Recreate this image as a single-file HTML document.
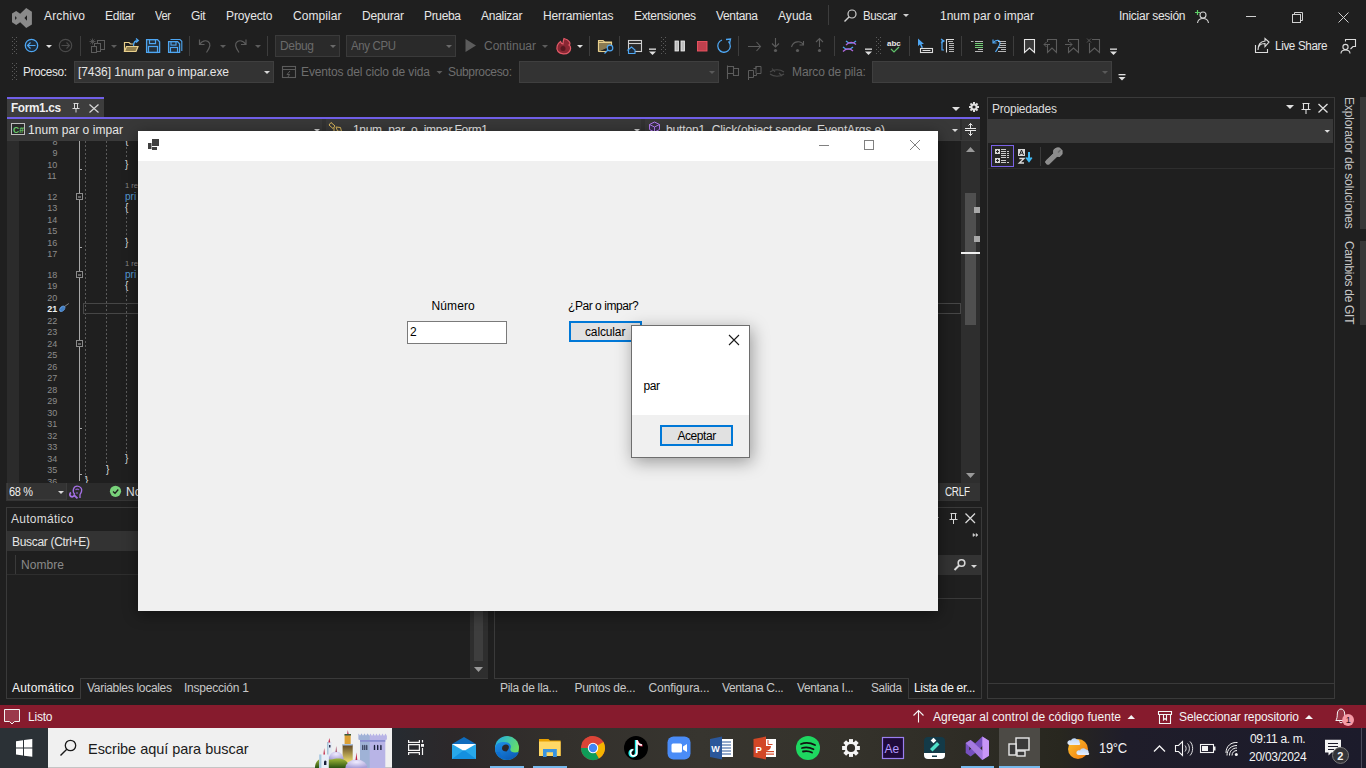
<!DOCTYPE html>
<html><head><meta charset="utf-8">
<style>
*{margin:0;padding:0;box-sizing:border-box}
html,body{width:1366px;height:768px;overflow:hidden;background:#1f1f1f;font-family:"Liberation Sans",sans-serif;color:#e6e6e6;font-size:12px}
.a{position:absolute}
.t{position:absolute;white-space:nowrap;line-height:1}
svg{position:absolute;overflow:visible}
</style></head><body>
<svg class="a" style="left:10px;top:6px;" width="24" height="24" viewBox="10 6 24 24"><path d="M12 13.5 L16.2 10.9 L20.2 13.8 L26.2 8 L31.9 11.7 L31.9 24.4 L26.2 28 L20.2 22.2 L16.2 25 L12 22.2 Z M15.1 16 L16.9 18 L15.1 20 Z M27 15.3 L24.4 18 L27 20.8 Z" fill="#8a8a8a" fill-rule="evenodd"/></svg>
<div class="t" style="left:44px;top:10px;font-size:12px;color:#e6e6e6;letter-spacing:0.164px;">Archivo</div>
<div class="t" style="left:105px;top:10px;font-size:12px;color:#e6e6e6;letter-spacing:-0.270px;">Editar</div>
<div class="t" style="left:155px;top:10px;font-size:12px;color:#e6e6e6;letter-spacing:-0.350px;transform-origin:0 0;transform:scaleX(0.9242);">Ver</div>
<div class="t" style="left:191px;top:10px;font-size:12px;color:#e6e6e6;letter-spacing:-0.418px;">Git</div>
<div class="t" style="left:226px;top:10px;font-size:12px;color:#e6e6e6;letter-spacing:-0.122px;">Proyecto</div>
<div class="t" style="left:293px;top:10px;font-size:12px;color:#e6e6e6;letter-spacing:0.069px;">Compilar</div>
<div class="t" style="left:362px;top:10px;font-size:12px;color:#e6e6e6;letter-spacing:-0.226px;">Depurar</div>
<div class="t" style="left:424px;top:10px;font-size:12px;color:#e6e6e6;letter-spacing:-0.339px;">Prueba</div>
<div class="t" style="left:481px;top:10px;font-size:12px;color:#e6e6e6;letter-spacing:-0.265px;">Analizar</div>
<div class="t" style="left:543px;top:10px;font-size:12px;color:#e6e6e6;letter-spacing:-0.139px;">Herramientas</div>
<div class="t" style="left:634px;top:10px;font-size:12px;color:#e6e6e6;letter-spacing:-0.338px;">Extensiones</div>
<div class="t" style="left:716px;top:10px;font-size:12px;color:#e6e6e6;letter-spacing:-0.341px;">Ventana</div>
<div class="t" style="left:778px;top:10px;font-size:12px;color:#e6e6e6;letter-spacing:0.047px;">Ayuda</div>
<div class="a" style="left:828px;top:5px;width:1px;height:20px;background:#3d3d3d;"></div>
<svg class="a" style="left:843px;top:8px;" width="15" height="15" viewBox="843 8 15 15"><circle cx="852" cy="14" r="4" fill="none" stroke="#d0d0d0" stroke-width="1.2"/><path d="M849 17 L844.5 21.5" stroke="#d0d0d0" stroke-width="1.4"/></svg>
<div class="t" style="left:863px;top:10px;font-size:12px;color:#e6e6e6;letter-spacing:-0.350px;transform-origin:0 0;transform:scaleX(0.9551);">Buscar</div>
<svg class="a" style="left:902px;top:13px;" width="8" height="6" viewBox="902 13 8 6"><path d="M903 14H909L906 17Z" fill="#d0d0d0"/></svg>
<div class="t" style="left:940px;top:10px;font-size:12px;color:#e6e6e6;letter-spacing:-0.003px;">1num par o impar</div>
<div class="t" style="left:1119px;top:10px;font-size:12px;color:#e6e6e6;letter-spacing:-0.272px;">Iniciar sesión</div>
<svg class="a" style="left:1193px;top:8px;" width="18" height="16" viewBox="1193 8 18 16"><path d="M1195 12.5H1200M1197.5 10V15" stroke="#5fd068" stroke-width="1.2"/><circle cx="1203" cy="15" r="3" fill="none" stroke="#d0d0d0" stroke-width="1.1"/><path d="M1197.5 23 C1198 19.5 1200.5 18.5 1203 18.5 C1205.5 18.5 1208 19.5 1208.5 23" fill="none" stroke="#d0d0d0" stroke-width="1.1"/></svg>
<div class="a" style="left:1246px;top:16px;width:10px;height:1px;background:#d0d0d0;"></div>
<svg class="a" style="left:1291px;top:11px;" width="13" height="13" viewBox="1291 11 13 13"><rect x="1292.5" y="14.5" width="8" height="8" fill="none" stroke="#d0d0d0"/><path d="M1294.5 14.5V12.5H1302.5V20.5H1300.5" fill="none" stroke="#d0d0d0"/></svg>
<svg class="a" style="left:1337px;top:11px;" width="13" height="13" viewBox="1337 11 13 13"><path d="M1338.5 12.5L1348.5 22.5M1348.5 12.5L1338.5 22.5" stroke="#d0d0d0" stroke-width="1"/></svg>
<svg class="a" style="left:0px;top:32px;" width="1366" height="56" viewBox="0 32 1366 56"><rect x="12" y="37" width="1" height="1" fill="#5a5a5a"/><rect x="16" y="37" width="1" height="1" fill="#5a5a5a"/><rect x="14" y="39" width="1" height="1" fill="#5a5a5a"/><rect x="12" y="41" width="1" height="1" fill="#5a5a5a"/><rect x="16" y="41" width="1" height="1" fill="#5a5a5a"/><rect x="14" y="43" width="1" height="1" fill="#5a5a5a"/><rect x="12" y="45" width="1" height="1" fill="#5a5a5a"/><rect x="16" y="45" width="1" height="1" fill="#5a5a5a"/><rect x="14" y="47" width="1" height="1" fill="#5a5a5a"/><rect x="12" y="49" width="1" height="1" fill="#5a5a5a"/><rect x="16" y="49" width="1" height="1" fill="#5a5a5a"/><rect x="14" y="51" width="1" height="1" fill="#5a5a5a"/><rect x="12" y="53" width="1" height="1" fill="#5a5a5a"/><rect x="16" y="53" width="1" height="1" fill="#5a5a5a"/><circle cx="31.5" cy="45.5" r="6.2" fill="#1c2a38" stroke="#4ea6f2" stroke-width="1.3"/><path d="M27.5 45.5H35.5M30.5 42.5L27.5 45.5L30.5 48.5" fill="none" stroke="#4ea6f2" stroke-width="1.2"/><path d="M46 45H52L49.0 48.0Z" fill="#e0e0e0"/><circle cx="65.5" cy="45.5" r="6.2" fill="none" stroke="#4a4a4a" stroke-width="1.2"/><path d="M61.5 45.5H69.5M66.5 42.5L69.5 45.5L66.5 48.5" fill="none" stroke="#4a4a4a" stroke-width="1.1"/><rect x="80" y="36" width="1" height="20" fill="#3d3d3d"/><path d="M92.5 38.5V44.5M89.5 41.5H95.5M90.5 39.5L94.5 43.5M94.5 39.5L90.5 43.5" stroke="#5c5c5c" stroke-width="0.8"/><rect x="97.5" y="40.5" width="7" height="9" fill="none" stroke="#5c5c5c"/><rect x="94.5" y="43.5" width="6" height="8" fill="#1f1f1f" stroke="#5c5c5c"/><rect x="91.5" y="46.5" width="5" height="6" fill="#1f1f1f" stroke="#5c5c5c"/><path d="M111 45H117L114.0 48.0Z" fill="#5c5c5c"/><path d="M124.5 51.5V42.5H129L130.5 44H133" fill="none" stroke="#e8cf8c" stroke-width="1.2"/><path d="M124.5 51.5L126.5 46.5H138L136 51.5Z" fill="#8f7d4c" stroke="#e8cf8c" stroke-width="1.2"/><path d="M133.5 46C133.5 42 135 40.5 138 40.5M136 38.5L138.3 40.5L136 42.5" fill="none" stroke="#4ea6f2" stroke-width="1.3"/><path d="M146.6 39.6H157.5L159.6 41.7V52.4H146.6Z" fill="#25303b" stroke="#4ea6f2" stroke-width="1.3"/><rect x="149.5" y="39.6" width="6" height="4" fill="none" stroke="#4ea6f2" stroke-width="1.2"/><rect x="148.5" y="46.5" width="9" height="6" fill="none" stroke="#4ea6f2" stroke-width="1.2"/><path d="M168.6 41.6H177.5L179.6 43.7V52.4H168.6Z" fill="#25303b" stroke="#4ea6f2" stroke-width="1.3"/><rect x="171" y="41.6" width="5" height="3.5" fill="none" stroke="#4ea6f2" stroke-width="1.1"/><rect x="170.5" y="47.5" width="7" height="5" fill="none" stroke="#4ea6f2" stroke-width="1.1"/><path d="M170.5 39.5H180L181.8 41.3V51" fill="none" stroke="#4ea6f2" stroke-width="1.1"/><rect x="189" y="36" width="1" height="20" fill="#3d3d3d"/><path d="M199.5 39.5V44.5H204.5M199.5 44.5C202 41 205.5 40 208 41.5C211 43.5 210.5 47 206.5 52.5" fill="none" stroke="#5c5c5c" stroke-width="1.2"/><path d="M220 45H226L223.0 48.0Z" fill="#5c5c5c"/><path d="M246 39.5V44.5H241M246 44.5C243.5 41 240 40 237.5 41.5C234.5 43.5 235 47 239 52.5" fill="none" stroke="#5c5c5c" stroke-width="1.2"/><path d="M255 45H261L258.0 48.0Z" fill="#5c5c5c"/><rect x="267" y="36" width="1" height="20" fill="#3d3d3d"/><path d="M330 45H336L333.0 48.0Z" fill="#6a6a6a"/><path d="M446 45H452L449.0 48.0Z" fill="#6a6a6a"/><path d="M465.5 39V52L476 45.5Z" fill="#5c5c5c"/><path d="M542 45H548L545.0 48.0Z" fill="#5c5c5c"/><path d="M564 38.5C570 40 571 44 569 45C571 46 571.5 50 568.5 52.5C566 54.5 560.5 54.5 558 51.5C555.5 48 557.5 43.5 560.5 41.5C561 43 562 44 563 44C563 41.5 563.5 40 564 38.5Z" fill="#8a2733" stroke="#e35a68" stroke-width="1.2"/><circle cx="563" cy="48.5" r="2.5" fill="#5a1820"/><path d="M577 45H583L580.0 48.0Z" fill="#e0e0e0"/><rect x="589" y="36" width="1" height="20" fill="#3d3d3d"/><path d="M598.5 51.5V40.5H603L604.5 42H611.5V46" fill="#8a7a52" stroke="#e8cf8c" stroke-width="1.1"/><path d="M598.5 51.5V42.5H611.5V45" fill="#8a7a52" stroke="#e8cf8c" stroke-width="1.1"/><path d="M598.5 51.5H606" stroke="#e8cf8c" stroke-width="1.1"/><circle cx="610" cy="48" r="2.8" fill="#1f2a36" stroke="#4ea6f2" stroke-width="1.2"/><path d="M608 50L604.5 53.5" stroke="#4ea6f2" stroke-width="1.3"/><rect x="619" y="36" width="1" height="20" fill="#3d3d3d"/><rect x="628.5" y="40.5" width="13" height="11" fill="#2a2a2a" stroke="#cfcfcf" stroke-width="1.1"/><path d="M628.5 43.5H641.5" stroke="#cfcfcf" stroke-width="1.1"/><path d="M628 50L631.5 47L635 50V53.5H628.5V50Z" fill="#1f2a36" stroke="#4ea6f2" stroke-width="1.1"/><rect x="649" y="48.5" width="7" height="1.3" fill="#e0e0e0"/><path d="M649 51.5H656L652.5 55.0Z" fill="#e0e0e0"/><rect x="661" y="37" width="1" height="1" fill="#5a5a5a"/><rect x="665" y="37" width="1" height="1" fill="#5a5a5a"/><rect x="663" y="39" width="1" height="1" fill="#5a5a5a"/><rect x="661" y="41" width="1" height="1" fill="#5a5a5a"/><rect x="665" y="41" width="1" height="1" fill="#5a5a5a"/><rect x="663" y="43" width="1" height="1" fill="#5a5a5a"/><rect x="661" y="45" width="1" height="1" fill="#5a5a5a"/><rect x="665" y="45" width="1" height="1" fill="#5a5a5a"/><rect x="663" y="47" width="1" height="1" fill="#5a5a5a"/><rect x="661" y="49" width="1" height="1" fill="#5a5a5a"/><rect x="665" y="49" width="1" height="1" fill="#5a5a5a"/><rect x="663" y="51" width="1" height="1" fill="#5a5a5a"/><rect x="661" y="53" width="1" height="1" fill="#5a5a5a"/><rect x="665" y="53" width="1" height="1" fill="#5a5a5a"/><rect x="675" y="41" width="3.5" height="10" fill="#bdbdbd" stroke="#f0f0f0" stroke-width="0.8"/><rect x="681" y="41" width="3.5" height="10" fill="#bdbdbd" stroke="#f0f0f0" stroke-width="0.8"/><rect x="697.5" y="41.5" width="9.5" height="9.5" fill="#c0404e" stroke="#f05563" stroke-width="0.9"/><path d="M728.5 41.5A6.3 6.3 0 1 1 722 40" fill="none" stroke="#4ea6f2" stroke-width="1.3"/><path d="M726 39.5L730.5 39L729.5 43.5" fill="none" stroke="#4ea6f2" stroke-width="1.3"/><rect x="738" y="36" width="1" height="20" fill="#3d3d3d"/><path d="M748 46.5H760.5M756.5 42L760.5 46.5L756.5 51" fill="none" stroke="#5c5c5c" stroke-width="1.1"/><path d="M775.5 38V47M772 43.5L775.5 47L779 43.5" fill="none" stroke="#5c5c5c" stroke-width="1.1"/><circle cx="775.5" cy="50.5" r="1.6" fill="#5c5c5c"/><path d="M791.5 47C793 41 801 40 803.5 45M803.5 41V45H799.5" fill="none" stroke="#5c5c5c" stroke-width="1.1"/><circle cx="797.5" cy="50.5" r="1.6" fill="#5c5c5c"/><path d="M819.5 38.5V47M816 42L819.5 38.5L823 42" fill="none" stroke="#5c5c5c" stroke-width="1.1"/><circle cx="819.5" cy="50.5" r="1.6" fill="#5c5c5c"/><rect x="834" y="36" width="1" height="20" fill="#3d3d3d"/><path d="M846 41C849 44 853 44 856 41M843 47C846 50 850 50 853 47" fill="none" stroke="#4ea6f2" stroke-width="1.2"/><path d="M846 45C849 41.5 853 41.5 856 44.5M843 51.5C846 48 850 48 853 51" fill="none" stroke="#b067e0" stroke-width="1.2"/><rect x="865" y="48.5" width="7" height="1.3" fill="#e0e0e0"/><path d="M865 51.5H872L868.5 55.0Z" fill="#e0e0e0"/><rect x="876" y="37" width="1" height="1" fill="#5a5a5a"/><rect x="880" y="37" width="1" height="1" fill="#5a5a5a"/><rect x="878" y="39" width="1" height="1" fill="#5a5a5a"/><rect x="876" y="41" width="1" height="1" fill="#5a5a5a"/><rect x="880" y="41" width="1" height="1" fill="#5a5a5a"/><rect x="878" y="43" width="1" height="1" fill="#5a5a5a"/><rect x="876" y="45" width="1" height="1" fill="#5a5a5a"/><rect x="880" y="45" width="1" height="1" fill="#5a5a5a"/><rect x="878" y="47" width="1" height="1" fill="#5a5a5a"/><rect x="876" y="49" width="1" height="1" fill="#5a5a5a"/><rect x="880" y="49" width="1" height="1" fill="#5a5a5a"/><rect x="878" y="51" width="1" height="1" fill="#5a5a5a"/><rect x="876" y="53" width="1" height="1" fill="#5a5a5a"/><rect x="880" y="53" width="1" height="1" fill="#5a5a5a"/><text x="887" y="45.5" font-family="Liberation Sans" font-weight="bold" font-size="8" fill="#e8e8e8">abc</text><path d="M891 49L894 52L899 47" fill="none" stroke="#5fc26a" stroke-width="1.2"/><rect x="909" y="36" width="1" height="20" fill="#3d3d3d"/><path d="M918 38.5V46L920 44.5L921.5 48L923 47.5L921.5 44L924 44Z" fill="#4ea6f2"/><rect x="920.5" y="48.5" width="12" height="4" fill="none" stroke="#dcdcdc" stroke-width="1.1"/><rect x="922.5" y="50" width="8" height="1" fill="#dcdcdc"/><path d="M944 41H942V50H944M941 39L944 41L941 43" fill="none" stroke="#4ea6f2" stroke-width="1.2"/><path d="M946.5 52.5V39.5H954" fill="none" stroke="#dcdcdc" stroke-width="1.1"/><path d="M948 41.5H953M949 43.5H954M949 45.5H954M949 47.5H954M949 49.5H954M949 51.5H954" stroke="#dcdcdc" stroke-width="0.8"/><rect x="961" y="36" width="1" height="20" fill="#3d3d3d"/><path d="M971 41.5H973.5M975 41.5H983M975 43.5H983M975 45.5H983M975 47.5H983M978 49.5H983M975 51.5H983" stroke="#c8c8c8" stroke-width="0.9"/><path d="M975 43.5H983M975 45.5H983M975 47.5H983" stroke="#6ccf6f" stroke-width="0.9"/><path d="M993 39.5V43H996.5M993 43C996 39 1000 40 1000 43C1000 46 998 47.5 995.5 52" fill="none" stroke="#4ea6f2" stroke-width="1.2"/><path d="M998 41.5H1006M1000 43.5H1006M1000 45.5H1006M998 47.5H1006M1001 49.5H1006M998 51.5H1006" stroke="#c8c8c8" stroke-width="0.9"/><rect x="1013" y="36" width="1" height="20" fill="#3d3d3d"/><path d="M1024.5 39.5H1034.5V52.5L1029.5 48L1024.5 52.5Z" fill="#3a3a3a" stroke="#e6e6e6" stroke-width="1.1"/><path d="M1047.5 42V39.5H1056.5V52.5L1052 48L1047.5 52.5V44.5" fill="none" stroke="#5c5c5c" stroke-width="1.1"/><path d="M1044 44.5H1050M1046.5 42L1044 44.5L1046.5 47" fill="none" stroke="#5c5c5c" stroke-width="1"/><path d="M1068.5 42V39.5H1078.5V52.5L1073.5 48L1068.5 52.5V47" fill="none" stroke="#5c5c5c" stroke-width="1.1"/><path d="M1065 44.5H1072M1069.5 42L1072 44.5L1069.5 47" fill="none" stroke="#5c5c5c" stroke-width="1"/><path d="M1089.5 43V52.5L1094.5 48L1099.5 52.5V39.5H1092" fill="none" stroke="#5c5c5c" stroke-width="1.1"/><path d="M1087 38.5L1091 42.5M1091 38.5L1087 42.5" stroke="#5c5c5c" stroke-width="0.9"/><rect x="1110" y="48.5" width="7" height="1.3" fill="#e0e0e0"/><path d="M1110 51.5H1117L1113.5 55.0Z" fill="#e0e0e0"/><path d="M1255.5 45V52.5H1267.5V49" fill="none" stroke="#dcdcdc" stroke-width="1.1"/><path d="M1258 50C1258 45 1261 43.5 1265 43.5V46.5L1269 42L1265 38.5V41C1260.5 41.5 1258 45 1258 50Z" fill="none" stroke="#dcdcdc" stroke-width="1.1"/><path d="M1345.5 41.5V39.5H1355.5V46.5H1353L1350.5 49" fill="none" stroke="#dcdcdc" stroke-width="1.1"/><circle cx="1345.5" cy="47" r="2.6" fill="#1f1f1f" stroke="#dcdcdc" stroke-width="1.1"/><path d="M1341 53.5C1341 50.5 1343 50 1345.5 50C1348 50 1350 50.5 1350 53.5" fill="none" stroke="#dcdcdc" stroke-width="1.1"/><rect x="12" y="63" width="1" height="1" fill="#5a5a5a"/><rect x="16" y="63" width="1" height="1" fill="#5a5a5a"/><rect x="14" y="65" width="1" height="1" fill="#5a5a5a"/><rect x="12" y="67" width="1" height="1" fill="#5a5a5a"/><rect x="16" y="67" width="1" height="1" fill="#5a5a5a"/><rect x="14" y="69" width="1" height="1" fill="#5a5a5a"/><rect x="12" y="71" width="1" height="1" fill="#5a5a5a"/><rect x="16" y="71" width="1" height="1" fill="#5a5a5a"/><rect x="14" y="73" width="1" height="1" fill="#5a5a5a"/><rect x="12" y="75" width="1" height="1" fill="#5a5a5a"/><rect x="16" y="75" width="1" height="1" fill="#5a5a5a"/><rect x="14" y="77" width="1" height="1" fill="#5a5a5a"/><rect x="12" y="79" width="1" height="1" fill="#5a5a5a"/><rect x="16" y="79" width="1" height="1" fill="#5a5a5a"/><path d="M264 71H270L267.0 74.0Z" fill="#d8d8d8"/><rect x="282.5" y="66.5" width="13" height="11" fill="none" stroke="#5c5c5c" stroke-width="1.1"/><path d="M282.5 69.5H295.5" stroke="#5c5c5c"/><path d="M290 71L287 74.5H289.5L288 77" fill="none" stroke="#5c5c5c" stroke-width="1"/><path d="M436.5 71H442.5L439.5 74.0Z" fill="#5c5c5c"/><path d="M709 71H715L712.0 74.0Z" fill="#555"/><path d="M727.5 79V65.5M727.5 66.5H733.5V73.5H727.5M733.5 68.5H738.5V75.5H733.5V73.5" fill="none" stroke="#5c5c5c" stroke-width="1.1"/><path d="M748.5 80V70.5H753.5V77.5H748.5M753.5 68.5H756V66.5H761V73.5H756.5V75.5H753.5M756 66V68.5V73.5" fill="none" stroke="#5c5c5c" stroke-width="1"/><path d="M770 72C774 69 780 69 784 72M770 74C774 77 780 77 784 74M772 68.5L775 72M782 76L779 73" fill="none" stroke="#4a4a4a" stroke-width="1.1"/><path d="M1102 71H1108L1105.0 74.0Z" fill="#555"/><rect x="1118.5" y="74" width="7" height="1.3" fill="#e0e0e0"/><path d="M1118.5 77H1125.5L1122.0 80.5Z" fill="#e0e0e0"/></svg>
<div class="a" style="left:275px;top:35px;width:65px;height:22px;background:#2a2a2a;border:1px solid #3a3a3a"></div>
<div class="t" style="left:280px;top:40px;font-size:12px;color:#6a6a6a;letter-spacing:-0.341px;">Debug</div>
<div class="a" style="left:346px;top:35px;width:110px;height:22px;background:#2a2a2a;border:1px solid #3a3a3a"></div>
<div class="t" style="left:351px;top:40px;font-size:12px;color:#6a6a6a;letter-spacing:-0.350px;transform-origin:0 0;transform:scaleX(0.9524);">Any CPU</div>
<div class="t" style="left:484px;top:40px;font-size:12px;color:#6a6a6a;letter-spacing:-0.004px;">Continuar</div>
<div class="t" style="left:1275px;top:40px;font-size:12px;color:#e6e6e6;letter-spacing:-0.350px;transform-origin:0 0;transform:scaleX(0.9701);">Live Share</div>
<div class="t" style="left:23px;top:66px;font-size:12px;color:#e6e6e6;letter-spacing:-0.350px;transform-origin:0 0;transform:scaleX(0.9798);">Proceso:</div>
<div class="a" style="left:74px;top:61px;width:200px;height:22px;background:#333333;border:1px solid #3f3f3f"></div>
<div class="t" style="left:78px;top:66px;font-size:12px;color:#e6e6e6;letter-spacing:-0.068px;">[7436] 1num par o impar.exe</div>
<div class="t" style="left:301px;top:66px;font-size:12px;color:#6e6e6e;letter-spacing:-0.128px;">Eventos del ciclo de vida</div>
<div class="t" style="left:448px;top:66px;font-size:12px;color:#6e6e6e;letter-spacing:-0.338px;">Subproceso:</div>
<div class="a" style="left:519px;top:61px;width:200px;height:22px;background:#333333;border:1px solid #3f3f3f"></div>
<div class="t" style="left:792px;top:66px;font-size:12px;color:#6e6e6e;letter-spacing:-0.121px;">Marco de pila:</div>
<div class="a" style="left:872px;top:61px;width:240px;height:22px;background:#333333;border:1px solid #3f3f3f"></div>
<svg class="a" style="left:0px;top:60px;" width="1366" height="26" viewBox="0 60 1366 26"><path d="M264 71H270L267.0 74.0Z" fill="#d8d8d8"/><path d="M709 71H715L712.0 74.0Z" fill="#5a5a5a"/><path d="M1102 71H1108L1105.0 74.0Z" fill="#5a5a5a"/></svg>
<svg class="a" style="left:0px;top:40px;" width="1366" height="16" viewBox="0 40 1366 16"><path d="M330 45H336L333.0 48.0Z" fill="#6a6a6a"/><path d="M446 45H452L449.0 48.0Z" fill="#6a6a6a"/></svg>
<div class="a" style="left:7px;top:141px;width:953px;height:342px;background:#1f1f1f;"></div>
<div class="a" style="left:7px;top:141px;width:12px;height:342px;background:#2b2b2b;"></div>
<div class="a" style="left:961px;top:141px;width:19px;height:342px;background:#2e2e2e;"></div>
<svg class="a" style="left:960px;top:140px;" width="22" height="345" viewBox="960 140 22 345"><path d="M966 152H975L970.5 147Z" fill="#9a9a9a"/><path d="M966 473H975L970.5 478Z" fill="#9a9a9a"/></svg>
<div class="a" style="left:965px;top:193px;width:11px;height:132px;background:#4f4f4f;"></div>
<div class="a" style="left:974px;top:207px;width:6px;height:6px;background:#a8a8a8;"></div>
<div class="a" style="left:974px;top:236px;width:6px;height:6px;background:#a8a8a8;"></div>
<div class="a" style="left:961px;top:252px;width:19px;height:2px;background:#f0f0f0;"></div>
<div class="t" style="left:52.6px;top:138px;font-size:9px;color:#8c8c8c;font-family:"Liberation Mono",monospace;">8</div>
<div class="t" style="left:52.6px;top:149px;font-size:9px;color:#8c8c8c;font-family:"Liberation Mono",monospace;">9</div>
<div class="t" style="left:47.2px;top:161px;font-size:9px;color:#8c8c8c;font-family:"Liberation Mono",monospace;">10</div>
<div class="t" style="left:47.2px;top:172px;font-size:9px;color:#8c8c8c;font-family:"Liberation Mono",monospace;">11</div>
<div class="t" style="left:47.2px;top:193px;font-size:9px;color:#8c8c8c;font-family:"Liberation Mono",monospace;">12</div>
<div class="t" style="left:47.2px;top:204px;font-size:9px;color:#8c8c8c;font-family:"Liberation Mono",monospace;">13</div>
<div class="t" style="left:47.2px;top:216px;font-size:9px;color:#8c8c8c;font-family:"Liberation Mono",monospace;">14</div>
<div class="t" style="left:47.2px;top:227px;font-size:9px;color:#8c8c8c;font-family:"Liberation Mono",monospace;">15</div>
<div class="t" style="left:47.2px;top:239px;font-size:9px;color:#8c8c8c;font-family:"Liberation Mono",monospace;">16</div>
<div class="t" style="left:47.2px;top:250px;font-size:9px;color:#8c8c8c;font-family:"Liberation Mono",monospace;">17</div>
<div class="t" style="left:47.2px;top:271px;font-size:9px;color:#8c8c8c;font-family:"Liberation Mono",monospace;">18</div>
<div class="t" style="left:47.2px;top:282px;font-size:9px;color:#8c8c8c;font-family:"Liberation Mono",monospace;">19</div>
<div class="t" style="left:47.2px;top:294px;font-size:9px;color:#8c8c8c;font-family:"Liberation Mono",monospace;">20</div>
<div class="t" style="left:47.2px;top:305px;font-size:9px;color:#f0f0f0;font-weight:bold;font-family:"Liberation Mono",monospace;">21</div>
<div class="t" style="left:47.2px;top:317px;font-size:9px;color:#8c8c8c;font-family:"Liberation Mono",monospace;">22</div>
<div class="t" style="left:47.2px;top:328px;font-size:9px;color:#8c8c8c;font-family:"Liberation Mono",monospace;">23</div>
<div class="t" style="left:47.2px;top:340px;font-size:9px;color:#8c8c8c;font-family:"Liberation Mono",monospace;">24</div>
<div class="t" style="left:47.2px;top:351px;font-size:9px;color:#8c8c8c;font-family:"Liberation Mono",monospace;">25</div>
<div class="t" style="left:47.2px;top:363px;font-size:9px;color:#8c8c8c;font-family:"Liberation Mono",monospace;">26</div>
<div class="t" style="left:47.2px;top:374px;font-size:9px;color:#8c8c8c;font-family:"Liberation Mono",monospace;">27</div>
<div class="t" style="left:47.2px;top:386px;font-size:9px;color:#8c8c8c;font-family:"Liberation Mono",monospace;">28</div>
<div class="t" style="left:47.2px;top:397px;font-size:9px;color:#8c8c8c;font-family:"Liberation Mono",monospace;">29</div>
<div class="t" style="left:47.2px;top:409px;font-size:9px;color:#8c8c8c;font-family:"Liberation Mono",monospace;">30</div>
<div class="t" style="left:47.2px;top:420px;font-size:9px;color:#8c8c8c;font-family:"Liberation Mono",monospace;">31</div>
<div class="t" style="left:47.2px;top:432px;font-size:9px;color:#8c8c8c;font-family:"Liberation Mono",monospace;">32</div>
<div class="t" style="left:47.2px;top:443px;font-size:9px;color:#8c8c8c;font-family:"Liberation Mono",monospace;">33</div>
<div class="t" style="left:47.2px;top:455px;font-size:9px;color:#8c8c8c;font-family:"Liberation Mono",monospace;">34</div>
<div class="t" style="left:47.2px;top:466px;font-size:9px;color:#8c8c8c;font-family:"Liberation Mono",monospace;">35</div>
<div class="t" style="left:47.2px;top:478px;font-size:9px;color:#8c8c8c;font-family:"Liberation Mono",monospace;">36</div>
<svg class="a" style="left:0px;top:0px;" width="1366" height="768" viewBox="0 0 1366 768"><rect x="79" y="141" width="1" height="340" fill="#a8a8a8"/><rect x="76.5" y="193.5" width="6" height="6" fill="#1f1f1f" stroke="#8c8c8c" stroke-width="1"/><rect x="78" y="196.5" width="3" height="1" fill="#b0b0b0"/><rect x="76.5" y="271.5" width="6" height="6" fill="#1f1f1f" stroke="#8c8c8c" stroke-width="1"/><rect x="78" y="274.5" width="3" height="1" fill="#b0b0b0"/><rect x="76.5" y="340.5" width="6" height="6" fill="#1f1f1f" stroke="#8c8c8c" stroke-width="1"/><rect x="78" y="343.5" width="3" height="1" fill="#b0b0b0"/><rect x="79" y="169" width="3" height="1" fill="#a8a8a8"/><rect x="79" y="247" width="3" height="1" fill="#a8a8a8"/><rect x="79" y="428" width="3" height="1" fill="#a8a8a8"/><rect x="79" y="474" width="3" height="1" fill="#a8a8a8"/><path d="M85.5 141V479" stroke="#5a5a5a" stroke-width="1" stroke-dasharray="2 2"/><path d="M106.5 141V466" stroke="#5a5a5a" stroke-width="1" stroke-dasharray="2 2"/><path d="M126.5 147V159" stroke="#5a5a5a" stroke-width="1" stroke-dasharray="2 2"/><path d="M126.5 213V238" stroke="#5a5a5a" stroke-width="1" stroke-dasharray="2 2"/><path d="M126.5 291V455" stroke="#5a5a5a" stroke-width="1" stroke-dasharray="2 2"/><rect x="83.5" y="303.5" width="877" height="10" fill="none" stroke="#464646" stroke-width="1"/><path d="M59.5 310C59.5 308 61.5 306 63.5 306C64.5 306 65 306.5 65 307.5C65 309.5 63 311.5 61 311.5C60 311.5 59.5 311 59.5 310Z" fill="#4f8fd6" stroke="#6aa8ef" stroke-width="0.7"/><path d="M60.5 310L64 306.5M61.5 311L65 307.5" stroke="#2a5a90" stroke-width="0.6"/><path d="M64.5 306.5L68.8 303.5" stroke="#9a9a9a" stroke-width="0.8"/></svg>
<div class="t" style="left:125px;top:136px;font-size:10px;color:#dcdcdc;font-family:"Liberation Mono",monospace;">{</div>
<div class="t" style="left:125px;top:203px;font-size:10px;color:#dcdcdc;font-family:"Liberation Mono",monospace;">{</div>
<div class="t" style="left:125px;top:281px;font-size:10px;color:#dcdcdc;font-family:"Liberation Mono",monospace;">{</div>
<div class="t" style="left:125px;top:160px;font-size:10px;color:#dcdcdc;font-family:"Liberation Mono",monospace;">}</div>
<div class="t" style="left:125px;top:238px;font-size:10px;color:#dcdcdc;font-family:"Liberation Mono",monospace;">}</div>
<div class="t" style="left:125px;top:454px;font-size:10px;color:#dcdcdc;font-family:"Liberation Mono",monospace;">}</div>
<div class="t" style="left:106px;top:465px;font-size:10px;color:#dcdcdc;font-family:"Liberation Mono",monospace;">}</div>
<div class="t" style="left:85px;top:476px;font-size:10px;color:#dcdcdc;font-family:"Liberation Mono",monospace;">}</div>
<div class="t" style="left:125px;top:192px;font-size:10px;color:#569cd6;font-family:"Liberation Mono",monospace;">pri</div>
<div class="t" style="left:125px;top:182px;font-size:7.5px;color:#8a8a8a;">1 re</div>
<div class="t" style="left:125px;top:270px;font-size:10px;color:#569cd6;font-family:"Liberation Mono",monospace;">pri</div>
<div class="t" style="left:125px;top:260px;font-size:7.5px;color:#8a8a8a;">1 re</div>
<div class="a" style="left:6px;top:483px;width:974px;height:18px;background:#2b2b2b;border:1px solid #353535;border-top:none"></div>
<div class="a" style="left:7px;top:483px;width:60px;height:17px;background:#333333;border:1px solid #3c3c3c;border-top:none"></div>
<div class="t" style="left:9px;top:486px;font-size:12px;color:#f0f0f0;letter-spacing:-0.350px;transform-origin:0 0;transform:scaleX(0.9124);">68 %</div>
<svg class="a" style="left:56px;top:486px;" width="90" height="14" viewBox="56 486 90 14"><path d="M58 491H64L61.0 494.0Z" fill="#d8d8d8"/><path d="M75 494.5C73.3 493 72.8 491 73.5 489C74.5 486.5 77 485.8 79 486.5C81 487.3 82 489.5 81.5 491.5C81.2 492.7 80.5 493.5 80 494.5V498" fill="none" stroke="#a470e4" stroke-width="1.3"/><path d="M77 492V494M75.5 490C76.5 488.8 78 488.8 79 490" fill="none" stroke="#8a5cc8" stroke-width="1.1"/><path d="M71 492.5A2.3 2.3 0 1 0 74.3 495.3L77.5 498.3" fill="none" stroke="#a470e4" stroke-width="1.8"/><circle cx="115.5" cy="491.3" r="5.6" fill="#78d27a"/><path d="M113 491.5L115 493.3L118.3 489.5" fill="none" stroke="#1f1f1f" stroke-width="1.3"/></svg>
<div class="t" style="left:126px;top:486px;font-size:12px;color:#f0f0f0;">No</div>
<div class="a" style="left:940px;top:483px;width:40px;height:17px;background:#333333;"></div>
<div class="t" style="left:945px;top:486px;font-size:12px;color:#f0f0f0;letter-spacing:-0.350px;transform-origin:0 0;transform:scaleX(0.8254);">CRLF</div>
<div class="a" style="left:7px;top:97px;width:97px;height:2px;background:#7160e8;"></div>
<div class="a" style="left:7px;top:99px;width:97px;height:18px;background:#3d3d3d;"></div>
<div class="t" style="left:11px;top:102px;font-size:12px;color:#f0f0f0;letter-spacing:-0.350px;transform-origin:0 0;transform:scaleX(0.9822);font-weight:bold;">Form1.cs</div>
<svg class="a" style="left:70px;top:102px;" width="12" height="12" viewBox="70 102 12 12"><path d="M73.5 103.5H78.5M74.5 103.5V108.5H77.5V103.5M72.5 108.5H79.5M76 108.5V112.5" fill="none" stroke="#d8d8d8" stroke-width="1"/></svg>
<svg class="a" style="left:88px;top:103px;" width="12" height="11" viewBox="88 103 12 11"><path d="M89.5 104.5L98.5 112.5M98.5 104.5L89.5 112.5" stroke="#d8d8d8" stroke-width="1.2"/></svg>
<div class="a" style="left:7px;top:117px;width:973px;height:2px;background:#7160e8;"></div>
<div class="a" style="left:7px;top:119px;width:973px;height:21px;background:#383838;"></div>
<div class="a" style="left:7px;top:140px;width:973px;height:1px;background:#2e2e2e;"></div>
<svg class="a" style="left:10px;top:122px;" width="16" height="14" viewBox="10 122 16 14"><rect x="11.5" y="123.5" width="13" height="11" fill="#2a2a2a" stroke="#bdbdbd" stroke-width="1"/><text x="13" y="132.5" font-family="Liberation Sans" font-size="8.5" font-weight="bold" fill="#6ccf6f">C#</text></svg>
<div class="t" style="left:28px;top:124px;font-size:12px;color:#e6e6e6;letter-spacing:0.063px;">1num par o impar</div>
<svg class="a" style="left:300px;top:120px;" width="680" height="20" viewBox="300 120 680 20"><path d="M314 129H320L317.0 132.0Z" fill="#cfcfcf"/><path d="M634 129H640L637.0 132.0Z" fill="#cfcfcf"/><path d="M952 129H958L955.0 132.0Z" fill="#d8d8d8"/></svg>
<div class="a" style="left:322px;top:119px;width:4px;height:21px;background:#323232;"></div>
<div class="a" style="left:641px;top:119px;width:4px;height:21px;background:#323232;"></div>
<svg class="a" style="left:326px;top:120px;" width="22" height="14" viewBox="326 120 22 14"><path d="M331 122.5L335 126L333 128.5L329 125Z M336 127L340.5 127.5L341.5 131.5L337.5 131Z M334 127.5V131.5" fill="none" stroke="#dcb85c" stroke-width="1"/></svg>
<div class="t" style="left:353px;top:124px;font-size:12px;color:#e6e6e6;letter-spacing:-0.305px;">1num_par_o_impar.Form1</div>
<svg class="a" style="left:646px;top:121px;" width="16" height="14" viewBox="646 121 16 14"><path d="M649.5 124.5L654.5 122L659.5 124.5V129.5L654.5 132L649.5 129.5Z M649.5 124.5L654.5 127L659.5 124.5 M654.5 127V132" fill="#3a2e52" stroke="#b27cf0" stroke-width="1"/></svg>
<div class="t" style="left:666px;top:124px;font-size:12px;color:#e6e6e6;letter-spacing:-0.128px;">button1_Click(object sender, EventArgs e)</div>
<div class="a" style="left:960px;top:119px;width:2px;height:21px;background:#2c2c2c;"></div>
<div class="a" style="left:962px;top:119px;width:18px;height:21px;background:#333333;"></div>
<div class="a" style="left:7px;top:140px;width:973px;height:1px;background:#3a3a3a;"></div>
<svg class="a" style="left:962px;top:120px;" width="18" height="20" viewBox="962 120 18 20"><path d="M965 128.5H976M965 130.5H976M970.5 123.5V128M968.5 125.5L970.5 123.5L972.5 125.5M970.5 131V135.5M968.5 133.5L970.5 135.5L972.5 133.5" fill="none" stroke="#e8e8e8" stroke-width="1"/></svg>
<svg class="a" style="left:948px;top:98px;" width="34" height="18" viewBox="948 98 34 18"><path d="M952 107H960L956.0 111.0Z" fill="#e0e0e0"/><g transform="translate(974 107)" fill="#e0e0e0"><rect x="-1" y="-5" width="2" height="2" transform="rotate(0)"/><rect x="-1" y="-5" width="2" height="2" transform="rotate(45)"/><rect x="-1" y="-5" width="2" height="2" transform="rotate(90)"/><rect x="-1" y="-5" width="2" height="2" transform="rotate(135)"/><rect x="-1" y="-5" width="2" height="2" transform="rotate(180)"/><rect x="-1" y="-5" width="2" height="2" transform="rotate(225)"/><rect x="-1" y="-5" width="2" height="2" transform="rotate(270)"/><rect x="-1" y="-5" width="2" height="2" transform="rotate(315)"/><circle r="3.6"/><circle r="1.6" fill="#1f1f1f"/></g></svg>
<div class="a" style="left:6px;top:507px;width:482px;height:172px;background:#1f1f1f;border:1px solid #3a3a3a;border-bottom:none"></div>
<div class="t" style="left:11px;top:513px;font-size:12px;color:#dcdcdc;letter-spacing:0.274px;">Automático</div>
<div class="a" style="left:7px;top:531px;width:480px;height:20px;background:#333333;"></div>
<div class="t" style="left:12px;top:536px;font-size:12px;color:#e6e6e6;letter-spacing:-0.311px;">Buscar (Ctrl+E)</div>
<div class="a" style="left:15px;top:555px;width:1px;height:19px;background:#3a3a3a;"></div>
<div class="t" style="left:21px;top:559px;font-size:12px;color:#8a8a8a;letter-spacing:0.064px;">Nombre</div>
<div class="a" style="left:7px;top:574px;width:463px;height:1px;background:#2e2e2e;"></div>
<div class="a" style="left:470px;top:575px;width:18px;height:103px;background:#2e2e2e;"></div>
<div class="a" style="left:474px;top:575px;width:9px;height:86px;background:#3e3e3e;"></div>
<svg class="a" style="left:470px;top:660px;" width="18" height="18" viewBox="470 660 18 18"><path d="M474 667H483L478.5 672Z" fill="#9a9a9a"/></svg>
<div class="a" style="left:6px;top:678px;width:482px;height:1px;background:#3a3a3a;"></div>
<div class="a" style="left:6px;top:678px;width:75px;height:21px;background:#1f1f1f;border:1px solid #3a3a3a;border-top:none"></div>
<div class="t" style="left:12px;top:682px;font-size:12px;color:#f4f4f4;letter-spacing:0.219px;">Automático</div>
<div class="t" style="left:87px;top:682px;font-size:12px;color:#c8c8c8;letter-spacing:-0.302px;">Variables locales</div>
<div class="t" style="left:184px;top:682px;font-size:12px;color:#c8c8c8;letter-spacing:-0.216px;">Inspección 1</div>
<div class="a" style="left:494px;top:507px;width:488px;height:172px;background:#1f1f1f;border:1px solid #3a3a3a;border-bottom:none"></div>
<svg class="a" style="left:930px;top:508px;" width="50" height="70" viewBox="930 508 50 70"><path d="M933 517H939L936.0 520.0Z" fill="#d8d8d8"/><path d="M950.5 513.5H956.5M951.5 513.5V519.5H955.5V513.5M949.5 519.5H957.5M953.5 519.5V524" fill="none" stroke="#d8d8d8" stroke-width="1"/><path d="M965.5 513.5L975 523M975 513.5L965.5 523" stroke="#d8d8d8" stroke-width="1.3"/><path d="M973 533.5L975 535L973 536.5ZM976 533.5L978 535L976 536.5Z" fill="#cfcfcf" stroke="#cfcfcf" stroke-width="0.6"/></svg>
<div class="a" style="left:495px;top:555px;width:486px;height:20px;background:#333333;"></div>
<svg class="a" style="left:945px;top:556px;" width="36" height="20" viewBox="945 556 36 20"><circle cx="961.5" cy="563" r="3.3" fill="none" stroke="#d8d8d8" stroke-width="1.6"/><path d="M959 565.5L954.5 570" stroke="#d8d8d8" stroke-width="2"/><path d="M971 565H977L974.0 568.0Z" fill="#d8d8d8"/></svg>
<div class="a" style="left:495px;top:598px;width:486px;height:1px;background:#3a3a3a;"></div>
<div class="a" style="left:494px;top:678px;width:488px;height:1px;background:#3a3a3a;"></div>
<div class="a" style="left:908px;top:678px;width:74px;height:21px;background:#1f1f1f;border:1px solid #3a3a3a;border-top:none"></div>
<div class="t" style="left:500px;top:682px;font-size:12px;color:#c8c8c8;letter-spacing:-0.311px;">Pila de lla...</div>
<div class="t" style="left:574.5px;top:682px;font-size:12px;color:#c8c8c8;letter-spacing:-0.277px;">Puntos de...</div>
<div class="t" style="left:648.5px;top:682px;font-size:12px;color:#c8c8c8;letter-spacing:-0.094px;">Configura...</div>
<div class="t" style="left:722px;top:682px;font-size:12px;color:#c8c8c8;letter-spacing:-0.396px;">Ventana C...</div>
<div class="t" style="left:797px;top:682px;font-size:12px;color:#c8c8c8;letter-spacing:-0.365px;">Ventana I...</div>
<div class="t" style="left:871px;top:682px;font-size:12px;color:#c8c8c8;letter-spacing:-0.350px;transform-origin:0 0;transform:scaleX(0.9807);">Salida</div>
<div class="t" style="left:914px;top:682px;font-size:12px;color:#f4f4f4;letter-spacing:-0.314px;">Lista de er...</div>
<div class="a" style="left:987px;top:97px;width:348px;height:602px;background:#1f1f1f;border:1px solid #3a3a3a"></div>
<div class="t" style="left:992px;top:103px;font-size:12px;color:#dcdcdc;letter-spacing:-0.239px;">Propiedades</div>
<svg class="a" style="left:1280px;top:100px;" width="52" height="16" viewBox="1280 100 52 16"><path d="M1286 105H1294L1290.0 109.0Z" fill="#e0e0e0"/><path d="M1302.5 103.5H1309.5M1303.5 103.5V109.5H1308.5V103.5M1301.5 109.5H1310.5M1306 109.5V114" fill="none" stroke="#e0e0e0" stroke-width="1.1"/><path d="M1318.5 104L1327.5 112.5M1327.5 104L1318.5 112.5" stroke="#e0e0e0" stroke-width="1.3"/></svg>
<div class="a" style="left:988px;top:119px;width:345px;height:24px;background:#393939;"></div>
<svg class="a" style="left:1320px;top:125px;" width="14" height="12" viewBox="1320 125 14 12"><path d="M1324.5 130H1330.0L1327.25 132.75Z" fill="#e0e0e0"/></svg>
<div class="a" style="left:988px;top:168px;width:346px;height:1px;background:#2e2e2e;"></div>
<div class="a" style="left:988px;top:683px;width:346px;height:1px;background:#3a3a3a;"></div>
<svg class="a" style="left:988px;top:143px;" width="80" height="26" viewBox="988 143 80 26"><rect x="991.5" y="145.5" width="22" height="21" fill="#262626" stroke="#7a62e6" stroke-width="1"/><rect x="995" y="149" width="5" height="5" fill="#d8d8d8"/><rect x="995" y="158" width="5" height="5" fill="#d8d8d8"/><path d="M996 151.5H999M997.5 150V153M996 160.5H999M997.5 159V162" stroke="#1f1f1f" stroke-width="0.9"/><path d="M1001 149.5H1006M1001 151.5H1006M1001 153.5H1006M1001 155.5H1006M1001 157.5H1006M1001 160.5H1006M1001 162.5H1006M1007 151.5H1009M1007 153.5H1009M1007 155.5H1009M1007 157.5H1009M1007 162.5H1009" stroke="#dcdcdc" stroke-width="0.9"/><rect x="1018" y="149" width="7" height="7" fill="#d8d8d8"/><path d="M1019.5 155L1021.5 150L1023.5 155M1020.3 153.2H1022.7" fill="none" stroke="#1f1f1f" stroke-width="1"/><path d="M1019.3 158.5H1024L1019.3 163H1024" fill="none" stroke="#d8d8d8" stroke-width="1.4"/><path d="M1029 152V160M1026.3 157.5L1029 161L1031.7 157.5" fill="none" stroke="#3fbaf5" stroke-width="2"/><rect x="1040" y="147" width="1" height="19" fill="#3a3a3a"/><path d="M1054.5 149L1057 147.8H1059.5L1062.2 150.5V154L1060 156.5H1057L1049 164.3H1047L1045.7 163V161L1053.5 153.5V150.5Z" fill="#8c8c8c" stroke="#a8a8a8" stroke-width="0.6"/><path d="M1057.5 152L1060 149.5L1061 150.5L1058.5 153Z" fill="#6a6a6a"/></svg>
<div class="a" style="left:1360px;top:97px;width:6px;height:132px;background:#383838;"></div>
<div class="a" style="left:1360px;top:241px;width:6px;height:84px;background:#383838;"></div>
<div class="t" style="left:1343px;top:97px;font-size:12px;color:#c8c8c8;transform-origin:0 0;transform:translate(12px,0) rotate(90deg);letter-spacing:-0.13px">Explorador de soluciones</div>
<div class="t" style="left:1343px;top:241px;font-size:12px;color:#c8c8c8;transform-origin:0 0;transform:translate(12px,0) rotate(90deg);letter-spacing:-0.3px">Cambios de GIT</div>
<div class="a" style="left:0px;top:705px;width:1366px;height:23px;background:#861b2d;"></div>
<svg class="a" style="left:0px;top:705px;" width="1366" height="23" viewBox="0 705 1366 23"><path d="M4.5 709.5H19.5V721.5H14.5L12 724L9.5 721.5H4.5Z" fill="#9b3a4b" stroke="#f4f4f4" stroke-width="1"/><path d="M918.5 710.5V722.5M913.5 715.5L918.5 710.5L923.5 715.5" fill="none" stroke="#f4f4f4" stroke-width="1.1"/><path d="M1127.5 719H1135L1131.25 715Z" fill="#f4f4f4"/><path d="M1158.5 711.5H1171.5V714.5H1158.5ZM1159.5 714.5V723.5H1170.5V714.5M1163.5 714.5V720L1165 718.5L1166.5 720V714.5" fill="none" stroke="#f4f4f4" stroke-width="1.1"/><path d="M1305 719H1313L1309 715Z" fill="#f4f4f4"/><path d="M1335.8 720.5C1337 719 1337.3 716.5 1337.3 714C1337.3 710.8 1339 709 1341 709C1343 709 1344.7 710.8 1344.7 714C1344.7 716.5 1345 719 1346.2 720.5Z" fill="#9a3848" stroke="#f4f4f4" stroke-width="1"/><path d="M1339.5 721.5A1.5 1.3 0 0 0 1342.5 721.5" fill="none" stroke="#f4f4f4" stroke-width="1"/><circle cx="1348.1" cy="720" r="5.9" fill="#f59aa6"/></svg>
<div class="t" style="left:28px;top:711px;font-size:12px;color:#f4f4f4;letter-spacing:-0.212px;">Listo</div>
<div class="t" style="left:933px;top:711px;font-size:12px;color:#f4f4f4;letter-spacing:0.035px;">Agregar al control de código fuente</div>
<div class="t" style="left:1179px;top:711px;font-size:12px;color:#f4f4f4;letter-spacing:-0.094px;">Seleccionar repositorio</div>
<div class="t" style="left:1345.8px;top:716px;font-size:9px;color:#2a0a10;">1</div>
<div class="a" style="left:0;top:728px;width:1366px;height:40px;background:linear-gradient(90deg,#22262c 0px,#262b31 392px,#2c282a 450px,#33302c 560px,#37352f 700px,#34322b 850px,#2f2d26 950px,#28271f 1060px,#1f1d2a 1125px,#1c1b2b 1366px)"></div>
<div class="a" style="left:0px;top:728px;width:48px;height:40px;background:#2b3136;"></div>
<div class="a" style="left:48px;top:728px;width:344px;height:40px;background:#f0f0f0;"></div>
<div class="a" style="left:48px;top:767px;width:344px;height:1px;background:#c4c4c4;"></div>
<svg class="a" style="left:0px;top:728px;" width="1366" height="40" viewBox="0 728 1366 40"><path d="M16 741.2L23 740.2V747.4H16Z M24 740.1L32.3 739V747.4H24Z M16 748.4H23V755.6L16 754.6Z M24 748.4H32.3V756.8L24 755.7Z" fill="#ffffff"/><circle cx="70.5" cy="745.5" r="5.2" fill="none" stroke="#1a1a1a" stroke-width="1.3"/><path d="M66.8 749.2L60.5 755.5" stroke="#1a1a1a" stroke-width="1.4"/><defs><linearGradient id="grn" x1="0" y1="0" x2="0" y2="1"><stop offset="0" stop-color="#a0b838"/><stop offset="1" stop-color="#2a5212"/></linearGradient><linearGradient id="ylw" x1="0" y1="0" x2="0" y2="1"><stop offset="0" stop-color="#5a4020"/><stop offset="1" stop-color="#f0e070"/></linearGradient><radialGradient id="dome" cx="0.5" cy="0.3" r="0.7"><stop offset="0" stop-color="#f0ecff"/><stop offset="1" stop-color="#a8a0d8"/></radialGradient></defs><path d="M358.6 733.4L360 736L361.5 733.4L363 736L364.5 733.4L366 736L367.5 733.4L369 736L370.5 733.4L372 736L373.5 733.4L375 736L376.5 733.4L378 736L379.5 733.4L381 736L382.5 733.4L384 736L385.5 733.4L386.9 736V739.5L385.3 740V768H360V740L358.6 739.5Z" fill="#b8b4e6"/><path d="M358.6 733.4L360 736L361.5 733.4L363 736L364.5 733.4L366 736L367.5 733.4L369.7 736V768H360V740L358.6 739.5Z" fill="#9fb2d6"/><rect x="360" y="740" width="25.3" height="1.8" fill="#8a8ed0"/><path d="M362.3 750V745.5Q362.8 744 363.3 745.5V750ZM364.3 750V745.5Q364.8 744 365.3 745.5V750ZM366.3 750V745.5Q366.8 744 367.3 745.5V750ZM373.8 750V745.5Q374.5 744 375.2 745.5V750ZM377 750V745.5Q377.7 744 378.4 745.5V750ZM380.2 750V745.5Q380.9 744 381.6 745.5V750Z" fill="#1a2038"/><rect x="344.6" y="734.6" width="6.1" height="10" fill="#dca035"/><rect x="342.6" y="744.4" width="10.1" height="18" fill="url(#ylw)"/><rect x="342.6" y="744" width="10.1" height="1.5" fill="#a8c0e0"/><path d="M347 735L347.8 730L348.8 735Z" fill="#c02848"/><rect x="344.5" y="734" width="6.5" height="1.5" fill="#3a5a40"/><rect x="327" y="742" width="4.8" height="26" fill="#e4eaf4"/><rect x="327" y="742" width="1.5" height="26" fill="#a8c4d8"/><path d="M328.3 742.5L329.3 738L330.3 742.5Z" fill="#c02848"/><rect x="329" y="745" width="1.5" height="2.5" fill="#2a3050"/><path d="M328.5 760A7.6 8.5 0 0 1 343.7 760Z" fill="url(#dome)"/><path d="M335.5 752L336.2 746L336.9 752Z" fill="#a04060"/><path d="M315 768C315 762 318 758.5 323 758.5C326 758.5 328 760 331 759.5C335 759 338 758 342 759C346 760 349 763 350 768Z" fill="url(#grn)"/><rect x="319.2" y="754.5" width="9.6" height="13.5" fill="#e8eef8"/><rect x="319.2" y="754.5" width="2.2" height="13.5" fill="#a8c8dc"/><path d="M323.4 754.5L324.2 748L325 754.5Z" fill="#c02848"/><path d="M324 765V761.5Q325.2 759.5 326.4 761.5V765Z" fill="#1a2038"/><path d="M345.4 768A11 8.5 0 0 1 367.4 768Z" fill="url(#dome)"/><path d="M355.5 760L356.4 752.5L357.3 760Z" fill="#c02848"/><path d="M408.6 740V742.4H419.4V740M408.6 744.6H419.4V750.4H408.6ZM408.6 755V752.6H419.4V755" fill="none" stroke="#f4f4f4" stroke-width="1.2"/><rect x="421.9" y="740" width="1.2" height="2.5" fill="#f4f4f4"/><rect x="421" y="744" width="3" height="2.8" fill="#f4f4f4"/><rect x="421.9" y="748" width="1.2" height="7" fill="#f4f4f4"/><path d="M452 744L464 737L476 744V759H452Z" fill="#0f6cbd"/><path d="M452 744H476V759H452Z" fill="#28a8ea"/><path d="M452 744L464 751L476 744" fill="#ffffff"/><path d="M452 759L464 750L476 759Z" fill="#1490df"/><defs><linearGradient id="edg" x1="0" y1="0" x2="1" y2="0.6"><stop offset="0" stop-color="#1aa8f0"/><stop offset="1" stop-color="#6ee45a"/></linearGradient><linearGradient id="edw" x1="0" y1="0" x2="0.6" y2="1"><stop offset="0" stop-color="#1e90e8"/><stop offset="1" stop-color="#0c5db8"/></linearGradient></defs><circle cx="507" cy="748" r="12" fill="url(#edg)"/><path d="M495 749C495 743 500 742 504 742C509 742 512 745 510.5 748.5C509.5 751 512 752.5 515 752.5C516.5 752.5 517.5 752.3 518.8 752C517 757 512.5 760 507 760C500.5 760 495 755 495 749Z" fill="url(#edw)"/><path d="M502 748.5C502 745.5 504 744.5 506 744.5C508 744.5 509.3 746 508.8 748C508.4 749.5 507.5 750.5 506.5 751.5C504 751.5 502 750.5 502 748.5Z" fill="#2c2729"/><path d="M500 752C501 756 504 759 509 759.5C504 760.5 497.5 757.5 496 752Z" fill="#0a6ad0" opacity="0.6"/><rect x="490" y="766" width="34" height="2" fill="#76b9ed"/><path d="M539 739H548.5L550 740.5H560.6V756H539Z" fill="#e8a000"/><rect x="539" y="741.5" width="21.6" height="14.5" fill="#ffd866"/><path d="M543 756.9V749H556.8V756.9H553V752.2H546.6V756.9Z" fill="#3a94e0"/><rect x="533" y="766" width="34" height="2" fill="#76b9ed"/><circle cx="593" cy="748" r="12" fill="#db4437"/><path d="M593 748L581 748A12 12 0 0 0 599 758.4Z" fill="#0f9d58"/><path d="M593 748L599 758.4A12 12 0 0 0 603.4 742Z" fill="#f4b400"/><path d="M593 748L593 736A12 12 0 0 0 581.6 744Z" fill="#db4437"/><circle cx="593" cy="748" r="5.2" fill="#ffffff"/><circle cx="593" cy="748" r="4.2" fill="#4285f4"/><circle cx="636" cy="748" r="12" fill="#000000"/><path d="M636 740V753A3.2 3.2 0 1 1 632.5 750" fill="none" stroke="#25f4ee" stroke-width="2.4"/><path d="M637.5 741C638 743.5 640 745.5 642.5 745.5" fill="none" stroke="#fe2c55" stroke-width="2.2"/><path d="M637 740V752.5A3.2 3.2 0 1 1 633.5 749.5M637 740.5C637.5 743 639.5 745 642 745" fill="none" stroke="#ffffff" stroke-width="1.6"/><rect x="667.5" y="736.5" width="23" height="23" rx="6" fill="#4a8cf7"/><rect x="671.5" y="743.5" width="10.5" height="9" rx="1.5" fill="#ffffff"/><path d="M683 746.5L687 744V752L683 749.5Z" fill="#ffffff"/><rect x="716" y="739" width="17" height="18" fill="#ffffff"/><path d="M718.5 742H731M718.5 745H731M718.5 748H731M718.5 751H731M718.5 754H731" stroke="#2b579a" stroke-width="1.2"/><path d="M710 739L722 736.5V759.5L710 757Z" fill="#2b579a"/><text x="711.3" y="752" font-family="Liberation Sans" font-weight="bold" font-size="9" fill="#ffffff">W</text><rect x="760" y="739" width="16" height="18" fill="#ffffff"/><path d="M766 741A5 5 0 1 0 771 746H766Z" fill="#d24726"/><path d="M768 740V744.5H772.5" fill="none" stroke="#d24726" stroke-width="1"/><rect x="766" y="751" width="8" height="1.2" fill="#d24726"/><rect x="766" y="753.5" width="8" height="1.2" fill="#d24726"/><path d="M753.5 739L766 736.5V759.5L753.5 757Z" fill="#d24726"/><text x="755.5" y="752.5" font-family="Liberation Sans" font-weight="bold" font-size="9.5" fill="#ffffff">P</text><circle cx="808" cy="748" r="12" fill="#1ed760"/><path d="M801 744C805 742.5 811 743 815 745M802 748C805.5 747 810 747.5 813.5 749.2M803 751.5C806 750.8 809.5 751.2 812 752.5" fill="none" stroke="#111" stroke-width="1.8" stroke-linecap="round"/><g transform="translate(851 748)" fill="#f4f4f4"><rect x="-2" y="-8.9" width="4" height="4" transform="rotate(0)"/><rect x="-2" y="-8.9" width="4" height="4" transform="rotate(45)"/><rect x="-2" y="-8.9" width="4" height="4" transform="rotate(90)"/><rect x="-2" y="-8.9" width="4" height="4" transform="rotate(135)"/><rect x="-2" y="-8.9" width="4" height="4" transform="rotate(180)"/><rect x="-2" y="-8.9" width="4" height="4" transform="rotate(225)"/><rect x="-2" y="-8.9" width="4" height="4" transform="rotate(270)"/><rect x="-2" y="-8.9" width="4" height="4" transform="rotate(315)"/><circle r="6.4"/><circle r="4.1" fill="#302d28"/></g><rect x="882.5" y="737.5" width="21" height="21" fill="#1f0a3a" stroke="#9a7ff0" stroke-width="1.2"/><text x="884.5" y="753" font-family="Liberation Sans" font-size="12" fill="#b89cff">Ae</text><rect x="924" y="737" width="21" height="22" rx="4" fill="#133a48"/><path d="M924 753H945V755A4 4 0 0 1 941 759H928A4 4 0 0 1 924 755Z" fill="#ffffff"/><path d="M930 749L937 742L939.5 744.5L932.5 751.5Z" fill="#4ee0c8"/><rect x="931.5" y="738.5" width="4" height="4" fill="#ffffff" transform="rotate(45 933.5 740.5)"/><rect x="932" y="755.5" width="5" height="1.5" fill="#133a48"/><path d="M965.7 742.9L970.6 739.9L975.3 743.3L982.3 736.5L989 740.8V755.7L982.3 759.9L975.3 753.1L970.6 756.4L965.7 753.1Z M969.3 745.9L971.4 748.2L969.3 750.5Z M983.3 745L980.2 748.2L983.3 751.5Z" fill="#7650bf" fill-rule="evenodd"/><path d="M965.7 742.9L970.6 739.9L982.3 750.5V759.9Z" fill="#a57ae0"/><path d="M982.3 736.5L989 740.8V755.7L982.3 759.9Z" fill="#c996f7"/><rect x="961" y="766" width="33" height="2" fill="#76b9ed"/><rect x="999" y="728" width="41" height="38" fill="#4c4a45"/><rect x="999" y="766" width="41" height="2" fill="#76b9ed"/><rect x="1016" y="738" width="13" height="12" fill="#3a3a3a" stroke="#e8e8e8" stroke-width="1.4"/><rect x="1009" y="744" width="7" height="11" fill="#3a3a3a" stroke="#e8e8e8" stroke-width="1.4"/><rect x="1017" y="751" width="8" height="5" fill="#3a3a3a" stroke="#e8e8e8" stroke-width="1.4"/><defs><linearGradient id="sun" x1="0" y1="0" x2="1" y2="1"><stop offset="0" stop-color="#fbc02d"/><stop offset="1" stop-color="#f07a10"/></linearGradient><linearGradient id="cld" x1="0" y1="0" x2="0" y2="1"><stop offset="0" stop-color="#b8d4f8"/><stop offset="1" stop-color="#e8f0fc"/></linearGradient></defs><circle cx="1078" cy="749" r="10" fill="url(#sun)"/><path d="M1070 745C1068 745 1067 743.5 1067.5 742C1068 740.5 1070 740 1071 740.5C1072 738 1075 737.5 1077 739.5C1079 739.5 1080 741 1079.5 742.5C1080.5 743 1080.5 745 1079 745Z" fill="url(#cld)"/><path d="M1079 755C1077 755 1076 753.5 1076.5 752C1077 750.5 1079 750 1080 750.5C1081 748 1084 747.5 1086 749.5C1088 749.5 1089 751 1088.5 752.5C1089.5 753 1089.5 755 1088 755Z" fill="url(#cld)"/><path d="M1154 751.5L1159.5 746L1165 751.5" fill="none" stroke="#f4f4f4" stroke-width="1.3"/><path d="M1175.5 745.5H1178.5L1182.5 741.5V755.5L1178.5 751.5H1175.5Z" fill="none" stroke="#f4f4f4" stroke-width="1.1"/><path d="M1185 745.5C1186.5 747 1186.5 750 1185 751.5M1187.5 743.5C1190 746 1190 751 1187.5 753.5M1190 741.5C1193.5 745 1193.5 752 1190 755.5" fill="none" stroke="#f4f4f4" stroke-width="0.9"/><rect x="1200.5" y="744.5" width="13" height="8" fill="none" stroke="#f4f4f4" stroke-width="1.1"/><rect x="1214" y="746.5" width="1.5" height="4" fill="#f4f4f4"/><rect x="1202" y="746" width="6" height="5" fill="#f4f4f4"/><path d="M1227 755.5C1227 749.5 1231 745.5 1237 745.5M1229.5 755.5C1229.5 751 1232.5 748 1237 748M1232 755.5C1232 752.5 1234 750.5 1237 750.5" fill="none" stroke="#f4f4f4" stroke-width="1"/><circle cx="1236.3" cy="754.5" r="1.5" fill="#f4f4f4"/><path d="M1226 753C1226 746 1231 742 1237.5 742.5" fill="none" stroke="#f4f4f4" stroke-width="1"/><path d="M1325 739.8H1341V752.5H1331.5L1328.5 755.5V752.5H1325Z" fill="#f4f4f4"/><path d="M1328 743.5H1338M1328 746.5H1338M1328 749.5H1334" stroke="#1c1b2a" stroke-width="1"/><circle cx="1340.5" cy="755.4" r="8" fill="#343438" stroke="#7a7a7a" stroke-width="1"/><rect x="1361" y="728" width="1" height="40" fill="#4a4a5a"/></svg>
<div class="t" style="left:88px;top:742px;font-size:14.5px;color:#1b1b1b;letter-spacing:-0.030px;">Escribe aquí para buscar</div>
<div class="t" style="left:1099px;top:741px;font-size:14.5px;color:#f4f4f4;letter-spacing:-0.350px;transform-origin:0 0;transform:scaleX(0.8932);">19°C</div>
<div class="t" style="left:1250px;top:733px;font-size:12px;color:#f4f4f4;letter-spacing:-0.345px;">09:11 a. m.</div>
<div class="t" style="left:1249px;top:751px;font-size:12px;color:#f4f4f4;letter-spacing:-0.262px;">20/03/2024</div>
<div class="t" style="left:1337.3px;top:750.5px;font-size:11px;color:#f4f4f4;font-weight:bold;">2</div>
<div class="a" style="left:138px;top:131px;width:800px;height:480px;background:#f0f0f0;box-shadow:0 3px 14px rgba(0,0,0,.45)"></div>
<div class="a" style="left:138px;top:131px;width:800px;height:30px;background:#ffffff;"></div>
<svg class="a" style="left:138px;top:131px;" width="800" height="30" viewBox="138 131 800 30"><rect x="148" y="143" width="3.5" height="6" fill="#404040"/><rect x="152" y="139" width="7" height="7" fill="#404040"/><rect x="152" y="147" width="5" height="3" fill="#404040"/><rect x="819" y="145" width="10" height="1" fill="#808080"/><rect x="864.5" y="140.5" width="9" height="9" fill="none" stroke="#808080" stroke-width="1"/><path d="M910 140L920 150M920 140L910 150" stroke="#808080" stroke-width="1"/></svg>
<div class="t" style="left:431.5px;top:300px;font-size:12px;color:#000000;letter-spacing:0.104px;">Número</div>
<div class="a" style="left:407px;top:321px;width:100px;height:23px;background:#ffffff;border:1px solid #7a7a7a"></div>
<div class="t" style="left:410px;top:326px;font-size:12px;color:#000000;">2</div>
<div class="t" style="left:568px;top:300px;font-size:12px;color:#000000;letter-spacing:-0.444px;">¿Par o impar?</div>
<div class="a" style="left:569px;top:321px;width:73px;height:21px;background:#e1e1e1;border:2px solid #0078d7"></div>
<div class="t" style="left:585px;top:326px;font-size:12px;color:#000000;letter-spacing:-0.136px;">calcular</div>
<div class="a" style="left:631px;top:325px;width:119px;height:133px;background:#f0f0f0;border:1px solid #6e6e6e;box-shadow:2px 4px 16px rgba(0,0,0,.36)"></div>
<div class="a" style="left:632px;top:326px;width:117px;height:89px;background:#ffffff;"></div>
<svg class="a" style="left:720px;top:330px;" width="30" height="20" viewBox="720 330 30 20"><path d="M729 335L739 345M739 335L729 345" stroke="#1a1a1a" stroke-width="1.1"/></svg>
<div class="t" style="left:643.5px;top:380px;font-size:12px;color:#000000;letter-spacing:-0.422px;">par</div>
<div class="a" style="left:660px;top:425px;width:73px;height:21px;background:#e1e1e1;border:2px solid #0078d7"></div>
<div class="t" style="left:677.5px;top:430px;font-size:12px;color:#000000;letter-spacing:-0.443px;">Aceptar</div>
</body></html>
